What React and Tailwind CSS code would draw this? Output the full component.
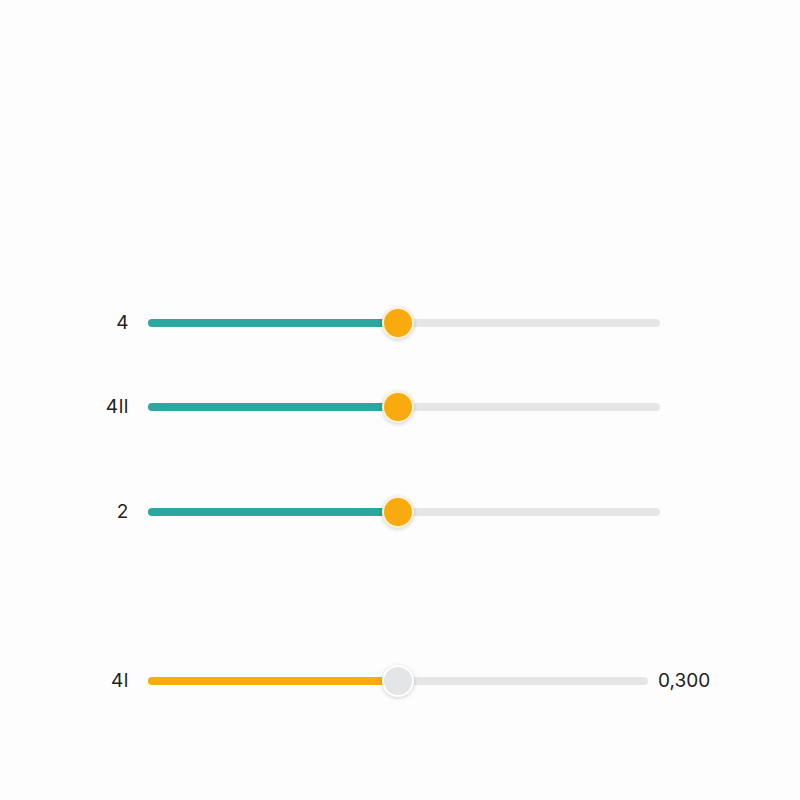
const rows = [
  { label: "4", fill: 250, color: "teal" },
  { label: "4ll", fill: 250, color: "teal" },
  { label: "2", fill: 250, color: "teal" },
];

function Slider({ fill, color, width }) {
  const filled = color === "teal" ? "bg-[#2aa79e]" : "bg-[#f7ad0f]";
  const knob =
    color === "teal"
      ? "bg-[#f8aa0e] border-2 border-[#fff3d6]"
      : "bg-[#e4e5e7] border-2 border-white";
  return (
    <div className="relative flex h-8 items-center" style={{ width }}>
      <div className="h-2 w-full rounded-full bg-[#e6e6e6]" />
      <div
        className={`absolute left-0 top-3 h-2 rounded-full ${filled}`}
        style={{ width: fill }}
      />
      <div
        className={`absolute top-0 h-8 w-8 rounded-full shadow-[0_1px_4px_rgba(0,0,0,0.18)] ${knob}`}
        style={{ left: fill - 16 }}
      />
    </div>
  );
}

export default function App() {
  return (
    <div className="min-h-[800px] w-[800px] bg-[#fdfdfd] font-['Inter',sans-serif] text-[#222]">
      <div className="flex flex-col pt-[307px]">
        {rows.map((r, i) => (
          <div
            key={i}
            className={`flex items-center ${i === 1 ? "mt-[52px]" : ""} ${i === 2 ? "mt-[73px]" : ""}`}
          >
            <div className="w-[129px] text-right text-[19px] tracking-[0.03em]">{r.label}</div>
            <div className="ml-[19px]">
              <Slider fill={r.fill} color={r.color} width={512} />
            </div>
          </div>
        ))}
        <div className="mt-[137px] flex items-center">
          <div className="w-[129px] text-right text-[19px] tracking-[0.03em]">4l</div>
          <div className="ml-[19px]">
            <Slider fill={250} color="orange" width={500} />
          </div>
          <div className="ml-[10px] text-[19px]">0,300</div>
        </div>
      </div>
    </div>
  );
}
